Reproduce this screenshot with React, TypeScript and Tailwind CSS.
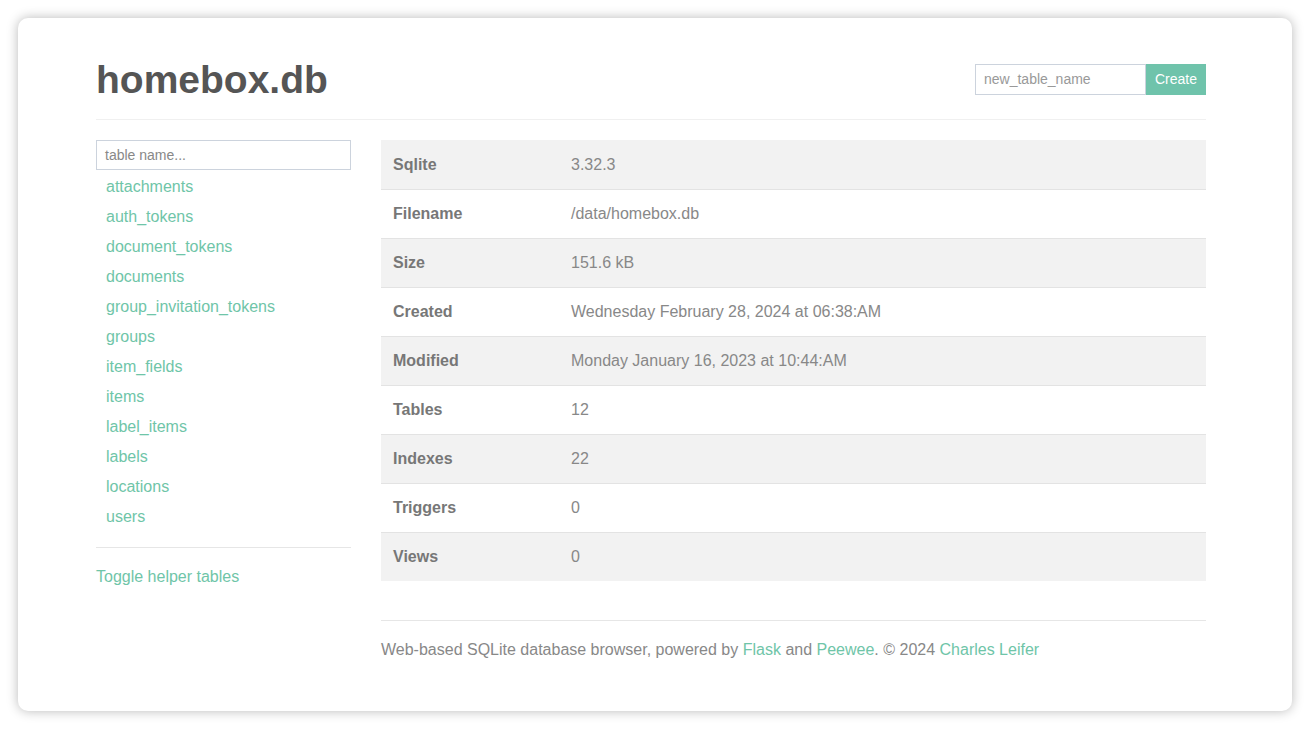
import React from "react";

const tables = [
  "attachments",
  "auth_tokens",
  "document_tokens",
  "documents",
  "group_invitation_tokens",
  "groups",
  "item_fields",
  "items",
  "label_items",
  "labels",
  "locations",
  "users",
];

const rows: [string, string][] = [
  ["Sqlite", "3.32.3"],
  ["Filename", "/data/homebox.db"],
  ["Size", "151.6 kB"],
  ["Created", "Wednesday February 28, 2024 at 06:38:AM"],
  ["Modified", "Monday January 16, 2023 at 10:44:AM"],
  ["Tables", "12"],
  ["Indexes", "22"],
  ["Triggers", "0"],
  ["Views", "0"],
];

export default function App() {
  return (
    <div
      className="w-[1310px] h-[729px] bg-white p-[18px]"
      style={{ fontFamily: '"Liberation Sans", Arial, Helvetica, sans-serif' }}
    >
      <div className="w-[1274px] h-[693px] bg-white rounded-[10px] shadow-[0_0_12px_rgba(0,0,0,0.28)] pl-[78px] pt-[40px]">
        <div className="w-[1110px]">
          <div className="flex items-center justify-between h-[43px]">
            <h1 className="text-[39px] leading-[43px] font-bold text-[#555555]">homebox.db</h1>
            <div className="flex h-[31px]">
              <div className="w-[171px] h-[31px] border border-[#ccd3dd] flex items-center pl-[8px] text-[14px] text-[#999999]">
                new_table_name
              </div>
              <div className="w-[60px] h-[31px] bg-[#6fc3ab] text-white text-[14px] flex items-center justify-center">
                Create
              </div>
            </div>
          </div>
          <div className="h-[18px] border-b border-[#f0f0f0] box-content" />
          <div className="flex gap-[30px] mt-[20px]">
            <div className="w-[255px] shrink-0">
              <div className="w-[255px] h-[30px] border border-[#ccd3dd] flex items-center pl-[8px] text-[14px] text-[#888888]">
                table name...
              </div>
              <ul className="mt-[2px]">
                {tables.map((t) => (
                  <li key={t} className="h-[30px] leading-[30px] pl-[10px] text-[16px] text-[#6fc5a8]">
                    {t}
                  </li>
                ))}
              </ul>
              <div className="mt-[15px] border-t border-[#e6e6e6]" />
              <div className="mt-[17px] leading-[24px] text-[16px] text-[#6fc5a8]">Toggle helper tables</div>
            </div>
            <div className="w-[825px]">
              <div>
                {rows.map(([k, v], i) => (
                  <div
                    key={k}
                    className={
                      "flex items-center h-[48px] text-[16px] border-t box-content " +
                      (i % 2 === 0 ? "bg-[#f2f2f2] " : "bg-white ") +
                      (i > 0 ? "border-[#e3e3e3]" : "border-[#f2f2f2]")
                    }
                  >
                    <div className="w-[178px] pl-[12px] font-bold text-[#777777]">{k}</div>
                    <div className="pl-[12px] text-[#888888]">{v}</div>
                  </div>
                ))}
              </div>
              <div className="mt-[39px] border-t border-[#e6e6e6]" />
              <div className="mt-[17px] leading-[24px] text-[16px] text-[#888888]">
                Web-based SQLite database browser, powered by{" "}
                <span className="text-[#6fc5a8]">Flask</span> and{" "}
                <span className="text-[#6fc5a8]">Peewee</span>. © 2024{" "}
                <span className="text-[#6fc5a8]">Charles Leifer</span>
              </div>
            </div>
          </div>
        </div>
      </div>
    </div>
  );
}
